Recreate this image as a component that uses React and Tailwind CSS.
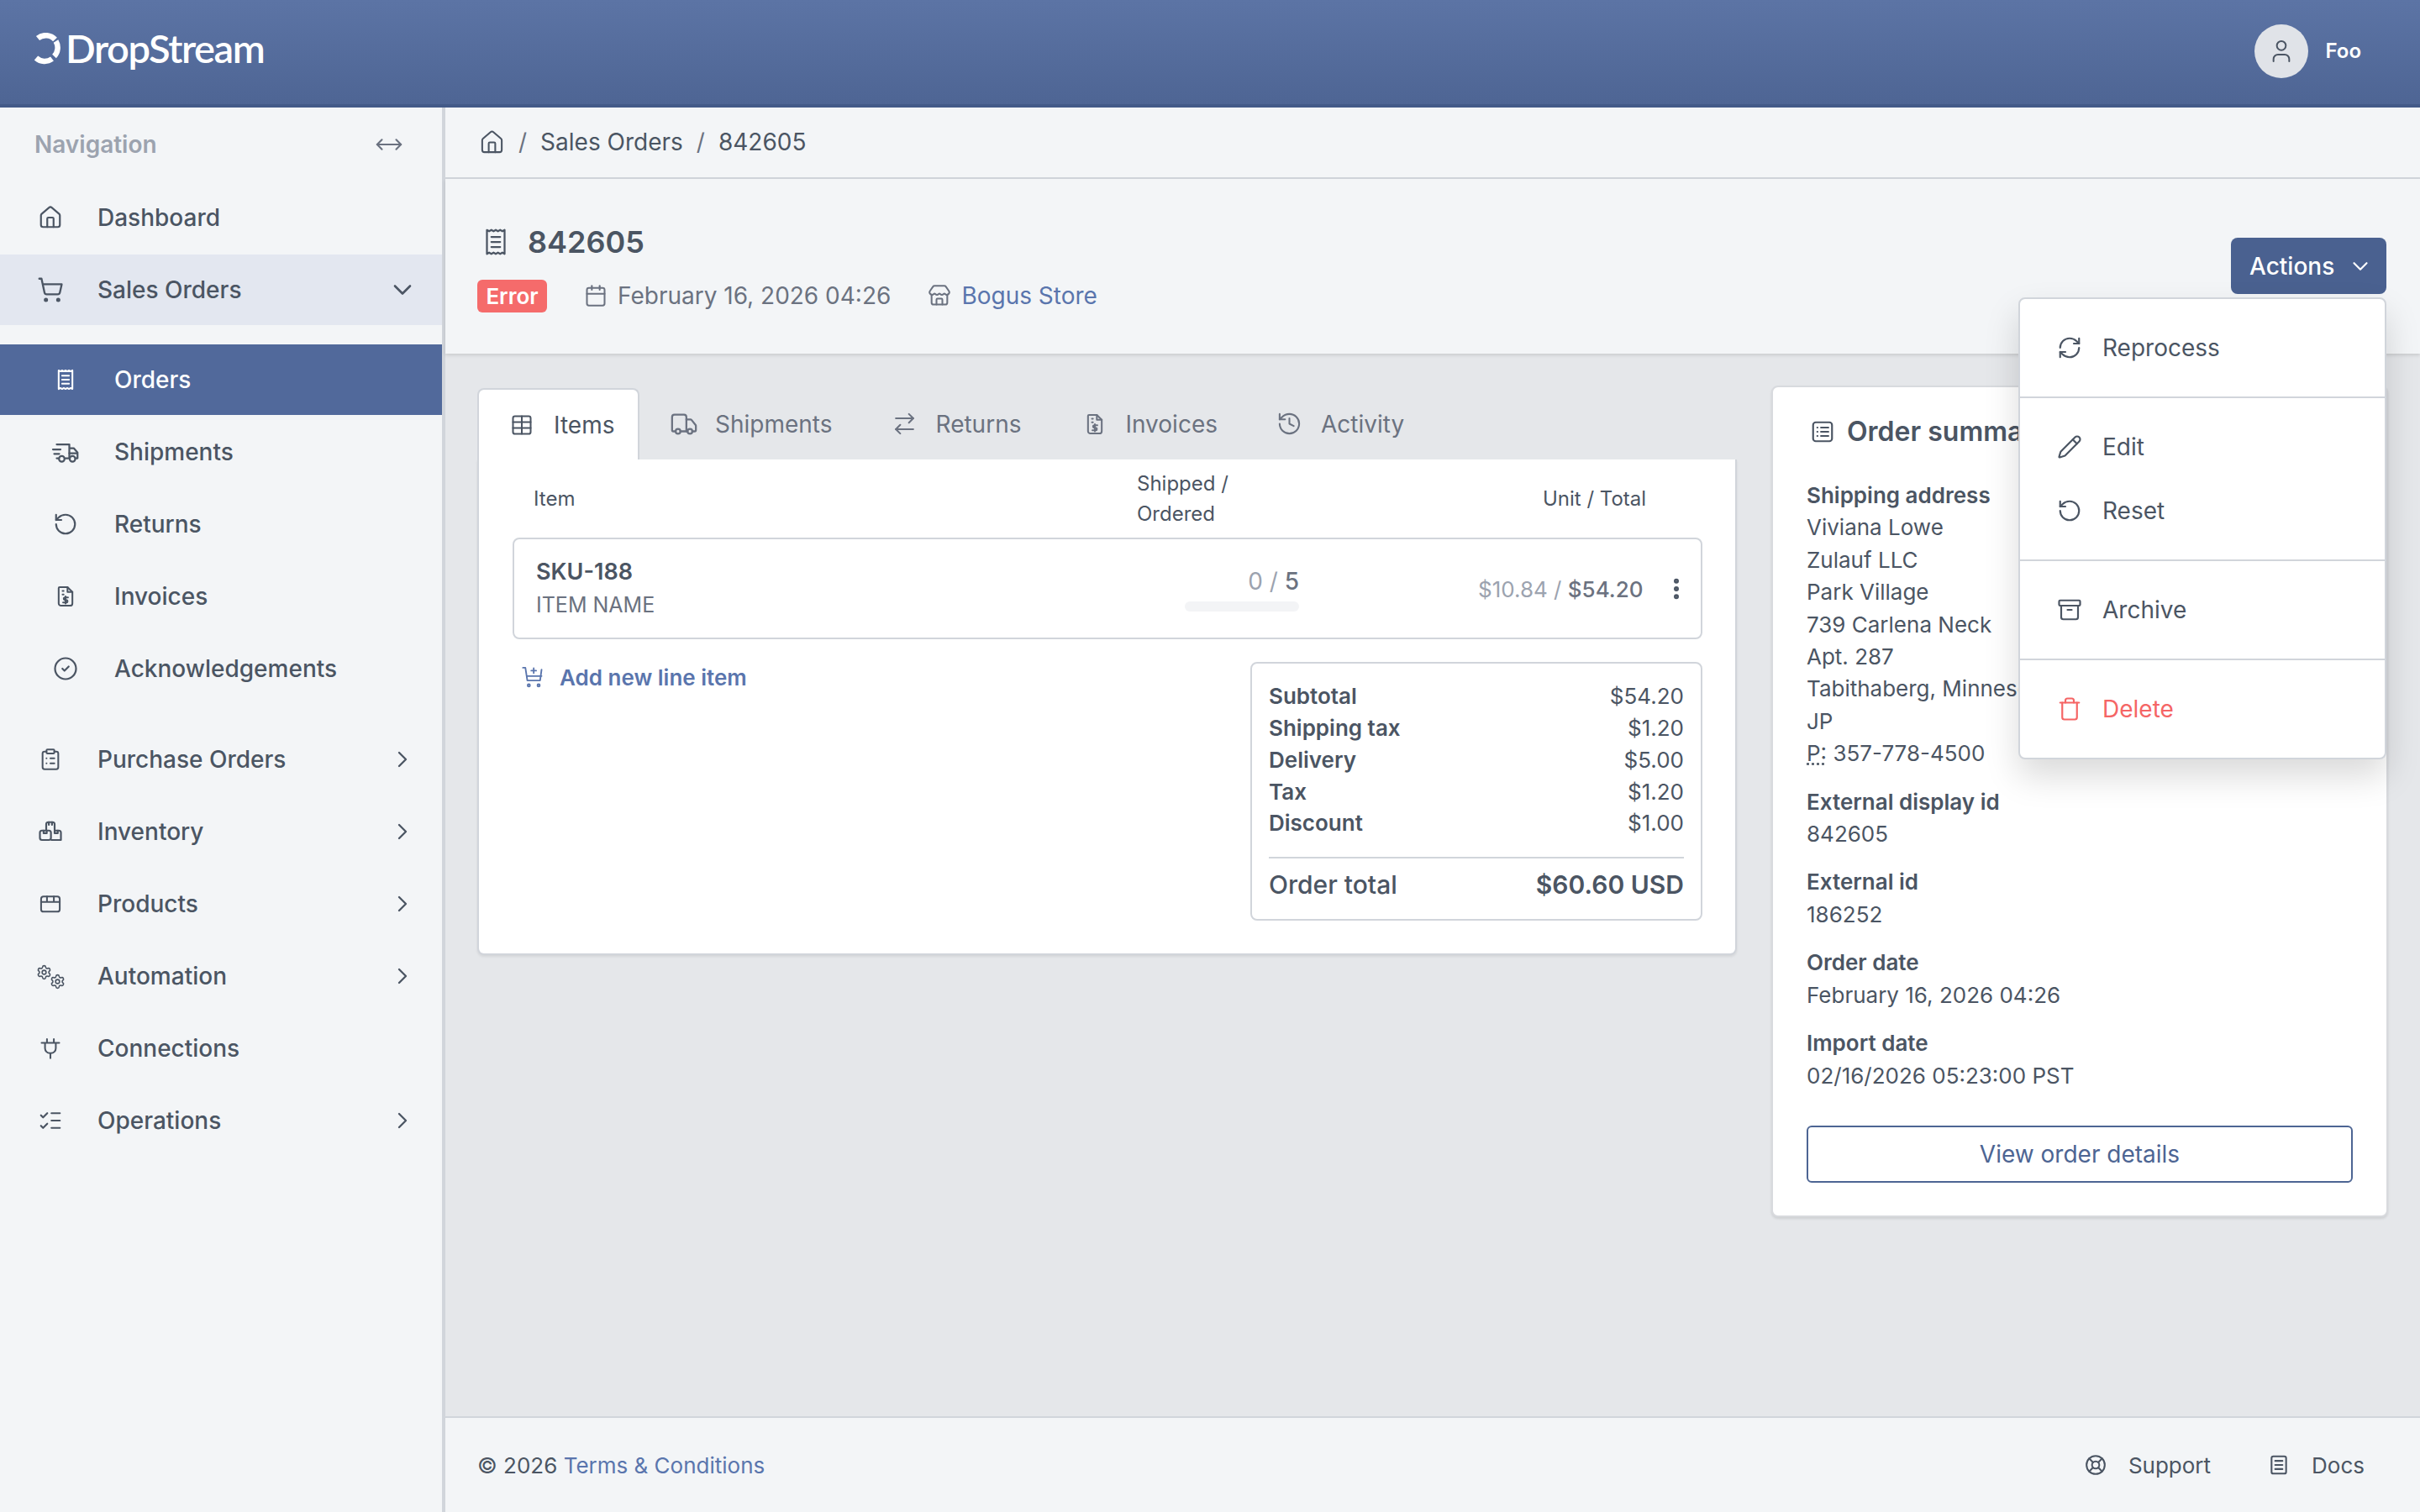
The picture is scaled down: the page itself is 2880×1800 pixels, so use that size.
import React from 'react';
import { Home, ShoppingCart, ChevronDown, ChevronRight, MoveHorizontal, RotateCcw, CircleCheck, ClipboardList, Package, Plug, ListChecks, Table, Truck, ArrowRightLeft, History, RefreshCw, Pencil, Archive, Trash, LifeBuoy, Calendar, Store, User, EllipsisVertical, Settings, ShoppingBasket } from 'lucide-react';

const Sv = ({ s = 28, children, className = '', sw = 1.75, vb = '0 0 24 24' }) => (
  <svg width={s} height={s} viewBox={vb} fill="none" stroke="currentColor" strokeWidth={sw} strokeLinecap="round" strokeLinejoin="round" className={className}>{children}</svg>
);
const Receipt = ({ s = 28, sw = 1.75 }) => (
  <Sv s={s} sw={sw}><path d="M5 2.5l1.75 1 1.75-1 1.75 1L12 2.500l1.750 1 1.750-1 1.750 1 1.750-1v19l-1.750-1-1.750 1-1.750-1-1.750 1-1.750-1-1.750 1-1.750-1L5 21.500z" /><path d="M8.500 8h7M8.500 12h7M8.500 16h7" /></Sv>
);
const SpeedTruck = ({ s = 36 }) => (
  <Sv s={s} sw={1.5}><path d="M5 6h10v11h-3M6 17H5M15 9h3.500L21.500 12.500V17H20" /><circle cx="9" cy="17.500" r="2.200" /><circle cx="17.500" cy="17.500" r="2.200" /><path d="M2 10h6M3 13.500h4" /><path d="M15 13h6" /></Sv>
);
const InvoiceIcon = ({ s = 28 }) => (
  <Sv s={s} sw={1.75}><path d="M4 3.500h10l6 6v9.500a2 2 0 0 1-2 2H6a2 2 0 0 1-2-2z" /><path d="M14 3.500v6h6" /><path d="M8 7.500h1M8 11h1" /><path d="M14.500 13.500h-2.700a1.300 1.300 0 0 0 0 2.600h1.400a1.300 1.300 0 0 1 0 2.600H10M12.500 12.500v7" /></Sv>
);
const TallInvoice = ({ s = 28 }) => (
  <Sv s={s} sw={1.75}><path d="M6 2.500h8l5 5V19a2.500 2.500 0 0 1-2.500 2.500h-9A2.500 2.500 0 0 1 5 19V3.500a1 1 0 0 1 1-1z" /><path d="M14 2.500V7.500h5M9 6.500h1M9 10h1" /><path d="M14.500 13h-3a1.300 1.300 0 0 0 0 2.600h1.200a1.300 1.300 0 0 1 0 2.600H9.500M12 12v7.200" /></Sv>
);
const Boxes = ({ s = 30 }) => (
  <Sv s={s} sw={1.75}><path d="M8 10V5a2 2 0 0 1 2-2h4a2 2 0 0 1 2 2v5" /><path d="M10.500 3v2.500M13.500 3v2.500" /><rect x="2" y="11" width="10.500" height="9" rx="2" /><path d="M5.500 11v2.500h3V11" /><path d="M16 11h4a2 2 0 0 1 2 2v7h-9" /><path d="M16 11v2.500h3V11" /></Sv>
);
const ProductBox = ({ s = 28 }) => (
  <Sv s={s} sw={1.75}><rect x="2.500" y="4.500" width="19" height="15.500" rx="2.500" /><path d="M2.500 10h19M8.500 4.500V10M15.500 4.500V10" /></Sv>
);
const Gears = () => (
  <span className="relative block h-[28px] w-[34px]">
    <Settings size={19} strokeWidth={2} className="absolute left-0 top-0" />
    <Settings size={19} strokeWidth={2} className="absolute bottom-[-2px] right-[-1px]" />
  </span>
);
const PlugIcon = ({ s = 28 }) => (
  <Sv s={s} sw={1.75}><path d="M3 6.500h18M6.500 6.500V12a5 5 0 0 0 5 5h1a5 5 0 0 0 5-5V6.500M8.500 2.500v4M15.500 2.500v4M12 17v5" /></Sv>
);
const SummaryIcon = ({ s = 30 }) => (
  <Sv s={s} sw={1.75}><rect x="3" y="3" width="18" height="18" rx="2.500" /><path d="M10.500 8h7M10.500 12h7M10.500 16h7M7 8h.2M7 12h.2M7 16h.2" /></Sv>
);
const CartPlus = () => (
  <Sv s={28} sw={1.6}><path d="M2 2.500h2.500L6.500 15.500h13l1.500-11" /><path d="M6 11h15" /><path d="M13 3v5M10.500 5.500h5" /><circle cx="8" cy="20.500" r="1.200" /><circle cx="18" cy="20.500" r="1.200" /></Sv>
);
const DocIcon = ({ s = 26 }) => (
  <Sv s={s} sw={1.9}><rect x="4" y="2.500" width="16" height="19" rx="2" /><path d="M8 7.500h8M8 12h8M8 16.500h8" /></Sv>
);

const Logo = () => (
  <div className="flex items-center">
    <svg width="32" height="38" viewBox="0 0 32 38" fill="none" className="mr-[6px] mt-[1px]">
      <path d="M5 6.500 A 15 15 0 0 1 25.500 8" stroke="#fff" strokeWidth="6.500" strokeLinecap="butt" />
      <path d="M26.500 10 A 15 15 0 0 1 24.500 28" stroke="#fff" strokeWidth="6.500" strokeLinecap="butt" />
      <path d="M22 31 A 15 15 0 0 1 3 30" stroke="#fff" strokeWidth="6.500" strokeLinecap="butt" />
    </svg>
    <span className="text-[47px] font-semibold leading-none tracking-[-1.4px] text-white [font-family:Lato,sans-serif]">DropStream</span>
  </div>
);

const Row = ({ icon, label, chevron, active, sub }) => (
  <div className={`mb-[2px] flex h-[84px] items-center text-[28px] font-medium leading-none ${active === 'dark' ? 'bg-[#51699b] text-white' : active === 'light' ? 'bg-[#e3e7f0] text-[#4b5563]' : 'text-[#4b5563]'}`}>
    <span className={`flex shrink-0 justify-center ${sub ? 'ml-[51px] mr-[32px] w-[53px]' : 'ml-[31px] mr-[27px] w-[58px]'}`}>{icon}</span>
    <span className="flex-1">{label}</span>
    {chevron === 'right' && <ChevronRight size={32} strokeWidth={1.75} className="mr-[31px]" />}
    {chevron === 'down' && <ChevronDown size={36} strokeWidth={1.75} className="mr-[29px]" />}
  </div>
);

const Sidebar = () => (
  <aside className="w-[530px] shrink-0 border-r-4 border-[#d1d5db] bg-[#f3f5f7]">
    <div className="flex h-[89px] items-center justify-between pb-[1px] pl-[41px] pr-[46px]">
      <span className="text-[28px] font-semibold text-[#9ca3af]">Navigation</span>
      <MoveHorizontal size={34} strokeWidth={1.5} className="text-[#6b7280]" />
    </div>
    <Row icon={<Home size={30} strokeWidth={1.75} />} label="Dashboard" />
    <Row icon={<ShoppingCart size={32} strokeWidth={1.75} />} label="Sales Orders" chevron="down" active="light" />
    <div className="pb-[22px] pt-[21px]">
      <Row sub icon={<Receipt />} label="Orders" active="dark" />
      <Row sub icon={<SpeedTruck />} label="Shipments" />
      <Row sub icon={<RotateCcw size={30} strokeWidth={1.75} />} label="Returns" />
      <Row sub icon={<TallInvoice />} label="Invoices" />
      <Row sub icon={<CircleCheck size={30} strokeWidth={1.75} />} label="Acknowledgements" />
    </div>
    <Row icon={<ClipboardList size={28} strokeWidth={1.75} />} label="Purchase Orders" chevron="right" />
    <Row icon={<Boxes />} label="Inventory" chevron="right" />
    <Row icon={<ProductBox />} label="Products" chevron="right" />
    <Row icon={<Gears />} label="Automation" chevron="right" />
    <Row icon={<PlugIcon />} label="Connections" />
    <Row icon={<ListChecks size={30} strokeWidth={1.75} />} label="Operations" chevron="right" />
  </aside>
);

const MenuItem = ({ icon, label, red }) => (
  <div className={`flex h-[76px] items-center gap-[24px] pl-[44px] text-[28px] ${red ? 'text-[#f56565]' : 'text-[#4b5563]'}`}>
    {icon}<span>{label}</span>
  </div>
);

const Dropdown = () => (
  <div className="absolute right-0 top-[71px] z-20 w-[438px] rounded-[8px] border-2 border-[#d1d5db] bg-white shadow-[0_20px_40px_rgba(0,0,0,0.15)]">
    <div className="py-[20px]"><MenuItem icon={<RefreshCw size={30} strokeWidth={1.75} />} label="Reprocess" /></div>
    <div className="border-t-2 border-[#d1d5db] py-[20px]">
      <MenuItem icon={<Pencil size={30} strokeWidth={1.75} />} label="Edit" />
      <MenuItem icon={<RotateCcw size={30} strokeWidth={1.75} />} label="Reset" />
    </div>
    <div className="border-t-2 border-[#d1d5db] py-[20px]"><MenuItem icon={<Archive size={30} strokeWidth={1.75} />} label="Archive" /></div>
    <div className="border-t-2 border-[#d1d5db] py-[20px]"><MenuItem red icon={<Trash size={30} strokeWidth={1.75} />} label="Delete" /></div>
  </div>
);

const Tab = ({ icon, label, className }) => (
  <div className={`flex items-center text-[28px] text-[#6b7280] ${className}`}>{icon}<span>{label}</span></div>
);

const Sum = ({ l, v }) => (
  <div className="flex h-[37.750px] items-center justify-between text-[26px]">
    <span className="font-semibold">{l}</span><span>{v}</span>
  </div>
);

const Field = ({ label, children, className = '' }) => (
  <div className={className}>
    <div className="font-semibold">{label}</div>
    {children}
  </div>
);

const Main = () => (
  <main className="relative flex min-w-0 flex-1 flex-col bg-[#e5e7ea]">
    <div className="flex h-[85px] shrink-0 items-center gap-[16px] border-b-2 border-[#d1d5db] bg-[#f3f5f7] pb-[1px] pl-[40px] text-[28px] text-[#4b5563]">
      <Home size={31} strokeWidth={1.6} />
      <span className="text-[#6b7280]">/</span><span>Sales Orders</span>
      <span className="text-[#6b7280]">/</span><span>842605</span>
    </div>
    <div className="relative z-10 flex h-[208px] shrink-0 justify-between bg-[#f3f5f7] pl-[38px] pr-[40px] shadow-[0_2px_4px_rgba(0,0,0,0.12)]">
      <div className="pt-[50px]">
        <div className="flex h-[50px] items-center gap-[20px] pl-[4px] text-[36px] font-semibold text-[#4b5563]">
          <Receipt s={36} sw={1.5} /><span>842605</span>
        </div>
        <div className="mt-[18px] flex items-center text-[28px] text-[#6b7280]">
          <span className="flex h-[39px] w-[83px] items-center justify-center rounded-[6px] bg-[#f56b6b] text-[26px] font-semibold text-white">Error</span>
          <Calendar size={28} strokeWidth={1.75} className="ml-[44px] mr-[12px]" />
          <span>February 16, 2026 04:26</span>
          <Store size={28} strokeWidth={1.75} className="ml-[44px] mr-[12px]" />
          <span className="text-[#5a75ad]">Bogus Store</span>
        </div>
      </div>
      <div className="relative mt-[70px] h-[67px]">
        <div className="flex h-[67px] w-[185px] items-center gap-[16px] rounded-[8px] bg-[#4a6190] pl-[22px] text-[28px] font-medium text-white">
          <span>Actions</span><ChevronDown size={30} strokeWidth={1.75} />
        </div>
        <Dropdown />
      </div>
    </div>
    <div className="flex flex-1 items-start gap-[41px] pl-[38px] pr-[38px] pt-[38px]">
      <section className="mt-[3px] w-[1499px] shrink-0">
        <div className="flex h-[85px] items-stretch">
          <div className="flex w-[193px] items-center rounded-t-[8px] border-x-2 border-t-2 border-[#d1d5db] bg-white pl-[37px] text-[28px] text-[#4b5563]">
            <Table size={28} strokeWidth={1.75} className="mr-[24px]" /><span>Items</span>
          </div>
          <Tab className="ml-[36px]" icon={<Truck size={34} strokeWidth={1.6} className="mr-[20px]" />} label="Shipments" />
          <Tab className="ml-[70px]" icon={<ArrowRightLeft size={31} strokeWidth={1.6} className="mr-[22px]" />} label="Returns" />
          <Tab className="ml-[74px]" icon={<TallInvoice s={28} />} label="" />
          <Tab className="ml-[22px]" icon={null} label="Invoices" />
          <Tab className="ml-[70px]" icon={<History size={31} strokeWidth={1.6} className="mr-[22px]" />} label="Activity" />
        </div>
        <div className="h-[590px] rounded-b-[8px] border-x-2 border-b-2 border-[#d1d5db] bg-white pl-[40px] pr-[39px] shadow-[0_2px_3px_rgba(0,0,0,0.08)]">
          <div className="flex h-[93px] items-center text-[24px] text-[#4b5563]">
            <span className="ml-[25px] w-[718px]">Item</span>
            <span className="w-[194px]">Shipped / Ordered</span>
            <span className="ml-[289px]">Unit / Total</span>
          </div>
          <div className="flex h-[121px] items-center rounded-[8px] border-2 border-[#d1d5db]">
            <div className="ml-[26px] w-[772px]">
              <div className="text-[27px] font-semibold leading-[34px] text-[#4b5563]">SKU-188</div>
              <div className="mt-[5px] text-[25px] leading-[34px] text-[#6b7280]">ITEM NAME</div>
            </div>
            <div className="mt-[2px] w-[136px]">
              <div className="text-right text-[28px] leading-[34px] text-[#9ca3af]">0 / <span className="font-medium text-[#6b7280]">5</span></div>
              <div className="mt-[7px] h-[12px] rounded-[6px] bg-[#f3f4f6]"></div>
            </div>
            <div className="ml-[213px] mt-[2px] whitespace-nowrap text-[26px] text-[#9ca3af]">$10.84 / <span className="font-medium text-[#6b7280]">$54.20</span></div>
            <EllipsisVertical size={32} strokeWidth={2.5} className="ml-[23px] text-[#4b5563]" />
          </div>
          <div className="flex justify-between pr-0 pt-[27px]">
            <div className="ml-[10px] mt-[3px] flex h-[30px] items-center gap-[18px] text-[26px] font-semibold text-[#5a75ad]">
              <CartPlus /><span>Add new line item</span>
            </div>
            <div className="h-[308px] w-[538px] rounded-[8px] border-2 border-[#d1d5db] px-[20px] pt-[20px] text-[#4b5563]">
              <Sum l="Subtotal" v="$54.20" />
              <Sum l="Shipping tax" v="$1.20" />
              <Sum l="Delivery" v="$5.00" />
              <Sum l="Tax" v="$1.20" />
              <Sum l="Discount" v="$1.00" />
              <div className="mt-[21px] flex h-[66px] items-center justify-between border-t-2 border-[#d1d5db] text-[30px]">
                <span className="font-medium">Order total</span><span className="font-semibold">$60.60 USD</span>
              </div>
            </div>
          </div>
        </div>
      </section>
      <section className="h-[990px] w-[734px] shrink-0 rounded-[8px] border-2 border-[#d8dade] bg-white px-[40px] text-[26px] leading-[38.400px] text-[#4b5563] shadow-[0_2px_3px_rgba(0,0,0,0.1)]">
        <div className="flex h-[110px] items-center gap-[14px] pl-[4px] pb-[4px] text-[32px] font-semibold">
          <SummaryIcon /><span>Order summary</span>
        </div>
        <Field label="Shipping address" className="pt-[-1px]">
          <div>Viviana Lowe</div>
          <div>Zulauf LLC</div>
          <div>Park Village</div>
          <div>739 Carlena Neck</div>
          <div>Apt. 287</div>
          <div>Tabithaberg, Minnesota</div>
          <div>JP</div>
          <div><span className="underline decoration-dotted">P:</span> 357-778-4500</div>
        </Field>
        <Field label="External display id" className="mt-[19px]"><div>842605</div></Field>
        <Field label="External id" className="mt-[19px]"><div>186252</div></Field>
        <Field label="Order date" className="mt-[19px]"><div>February 16, 2026 04:26</div></Field>
        <Field label="Import date" className="mt-[19px]"><div>02/16/2026 05:23:00 PST</div></Field>
        <div className="mt-[40px] flex h-[68px] items-center justify-center rounded-[6px] border-2 border-[#4d6593] text-[28px] text-[#4d6593]">View order details</div>
      </section>
    </div>
    <footer className="flex h-[114px] shrink-0 items-center justify-between border-t-2 border-[#d1d5db] bg-[#f3f5f7] pl-[38px] pr-[66px] text-[26px] text-[#4b5563]">
      <div>© 2026 <span className="text-[#5a75ad]">Terms &amp; Conditions</span></div>
      <div className="flex items-center">
        <LifeBuoy size={26} strokeWidth={1.9} className="mr-[26px]" /><span>Support</span>
        <DocIconWrap /><span>Docs</span>
      </div>
    </footer>
  </main>
);
const DocIconWrap = () => <span className="ml-[68px] mr-[26px] flex"><DocIcon /></span>;

export default function App() {
  return (
    <div className="flex h-screen w-full flex-col overflow-hidden [font-family:Inter,sans-serif]">
      <header className="flex h-[128px] shrink-0 items-center justify-between border-b-4 border-[#435a88] bg-gradient-to-b from-[#5c74a5] to-[#4e6594] pb-[10px] pl-[40px] pr-[70px]">
        <Logo />
        <div className="mt-[8px] flex items-center gap-[20px]">
          <div className="flex h-[64px] w-[64px] items-center justify-center rounded-full bg-[#e0e3e8] text-[#4b5563]"><User size={32} strokeWidth={1.5} /></div>
          <span className="text-[24px] font-semibold text-white">Foo</span>
        </div>
      </header>
      <div className="flex min-h-0 flex-1">
        <Sidebar />
        <Main />
      </div>
    </div>
  );
}
